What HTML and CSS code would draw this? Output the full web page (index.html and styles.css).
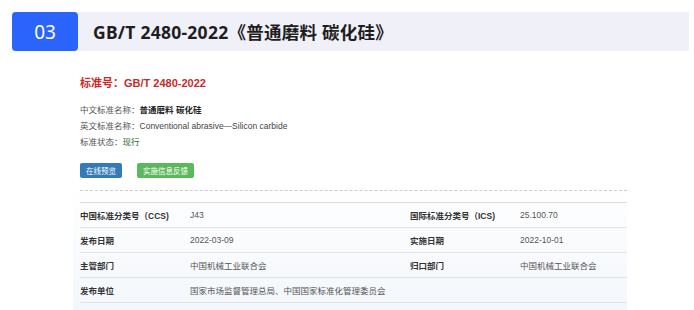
FILE: index.html
```html
<!DOCTYPE html>
<html lang="zh-CN">
<head>
<meta charset="utf-8">
<link rel="stylesheet" href="styles.css">
</head>
<body>
<div class="head">
  <div class="num">03</div>
  <div class="title">GB/T 2480-2022《普通磨料 碳化硅》</div>
</div>
<div class="panel">
  <div class="std">标准号：GB/T 2480-2022</div>
  <div class="info">
    <p>中文标准名称：<b>普通磨料 碳化硅</b></p>
    <p>英文标准名称：<span class="en">Conventional abrasive—Silicon carbide</span></p>
    <p>标准状态：<span class="state">现行</span></p>
  </div>
  <div class="btns">
    <span class="btn blue">在线预览</span>
    <span class="btn green">实施信息反馈</span>
  </div>
  <div class="dash"></div>
  <div class="tbl">
    <div class="row"><span class="k">中国标准分类号（CCS)</span><span class="v">J43</span><span class="k">国际标准分类号（ICS)</span><span class="v">25.100.70</span></div>
    <div class="row"><span class="k">发布日期</span><span class="v">2022-03-09</span><span class="k">实施日期</span><span class="v">2022-10-01</span></div>
    <div class="row"><span class="k">主管部门</span><span class="v">中国机械工业联合会</span><span class="k">归口部门</span><span class="v">中国机械工业联合会</span></div>
    <div class="row"><span class="k">发布单位</span><span class="v wide">国家市场监督管理总局、中国国家标准化管理委员会</span></div>
  </div>
</div>
</body>
</html>
```
FILE: styles.css
```css
* { box-sizing: border-box; }
html, body { margin: 0; padding: 0; background: #fff; }
body { font-family: "Liberation Sans", "Noto Sans CJK SC", sans-serif; color: #333; }
.head {
  display: flex;
  margin: 12px 5px 0 12px;
  height: 39px;
  background: #f0f0f8;
}
.num {
  width: 66px;
  background: #2b63fd;
  color: #fff;
  border-radius: 4px;
  font-family: "Noto Sans", "Noto Sans CJK SC", sans-serif;
  font-size: 19px;
  display: flex;
  align-items: center;
  justify-content: center;
}
.title {
  padding-left: 15px;
  display: flex;
  align-items: center;
  font-family: "Noto Sans", "Noto Sans CJK SC", sans-serif;
  font-weight: 700;
  font-size: 17.5px;
  letter-spacing: 0.25px;
  color: #1e1e1e;
}
.panel {
  margin-left: 73px;
  width: 554px;
  padding: 25px 0 0 7px;
  height: 270px;
  background: linear-gradient(#fff 0%, #fff 50%, #f2f6fb 100%);
}
.std {
  color: #cc2a2a;
  font-weight: 700;
  font-size: 11px;
  line-height: 14px;
}
.info { margin-top: 12px; font-size: 8.5px; color: #555; }
.info p { margin: 0; line-height: 16px; }
.info b { color: #222; }
.en { color: #444; }
.state { color: #2a6e2a; }
.btns { display: flex; gap: 15px; margin-top: 13px; }
.btn {
  height: 15px;
  padding: 0 6px;
  border-radius: 2px;
  color: #fff;
  font-size: 7.5px;
  display: flex;
  align-items: center;
}
.blue { background: #337ab7; }
.green { background: #5cb85c; }
.dash { border-top: 1px dashed #ccc; margin-top: 12px; }
.tbl { margin-top: 11px; border-top: 1px solid #ddd; }
.row {
  display: grid;
  grid-template-columns: 110px 220px 110px 1fr;
  height: 25px;
  align-items: center;
  border-bottom: 1px solid #e2e2e2;
  font-size: 8.5px;
}
.k { font-weight: 700; color: #333; }
.v { color: #555; }
.wide { grid-column: 2 / 5; }
```
